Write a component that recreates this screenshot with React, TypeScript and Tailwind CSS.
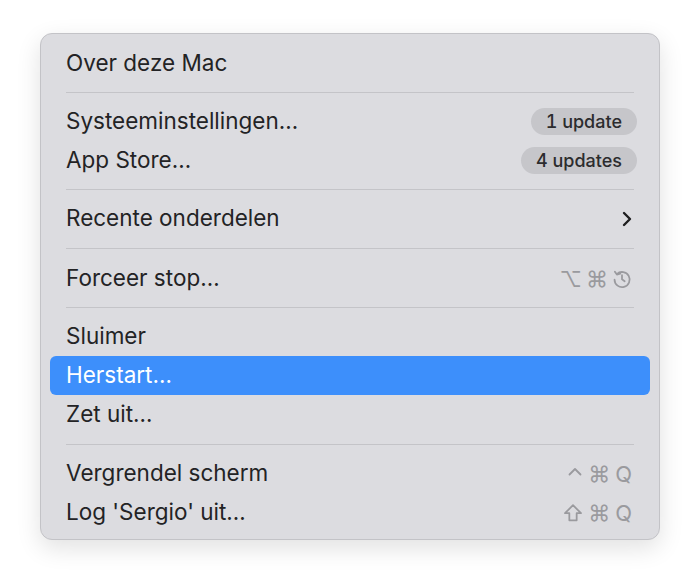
import React from "react";

type Item =
  | { kind: "sep"; h: string }
  | {
      kind: "item";
      label: string;
      badge?: string;
      chevron?: boolean;
      shortcut?: React.ReactNode;
      active?: boolean;
    };

const RestartIcon = () => (
  <svg width="20" height="20" viewBox="0 0 18 18" fill="none" stroke="currentColor" strokeWidth="1.6" strokeLinecap="round" strokeLinejoin="round">
    <path d="M4.4 4.6 A6.8 6.8 0 1 1 2.3 9.6" />
    <path d="M2.6 2.4 L4.4 5 L7.4 4.2" />
    <path d="M9 5.6 L9 9.3 L11.4 11" />
  </svg>
);

const ShiftIcon = () => (
  <svg width="20" height="20" viewBox="0 0 18 18" fill="none" stroke="currentColor" strokeWidth="1.6" strokeLinejoin="round">
    <path d="M9 2 L16.2 9.2 L12.3 9.2 L12.3 15.6 L5.7 15.6 L5.7 9.2 L1.8 9.2 Z" />
  </svg>
);

const CaretIcon = () => (
  <svg width="16" height="20" viewBox="0 0 16 20" fill="none" stroke="currentColor" strokeWidth="1.8" strokeLinecap="round" strokeLinejoin="round">
    <path d="M2.5 10.5 L8 5 L13.5 10.5" />
  </svg>
);

const items: Item[] = [
  { kind: "item", label: "Over deze Mac" },
  { kind: "sep", h: "h-[19px]" },
  { kind: "item", label: "Systeeminstellingen…", badge: "1 update" },
  { kind: "item", label: "App Store…", badge: "4 updates" },
  { kind: "sep", h: "h-[19px]" },
  { kind: "item", label: "Recente onderdelen", chevron: true },
  { kind: "sep", h: "h-[21px]" },
  {
    kind: "item",
    label: "Forceer stop…",
    shortcut: (
      <span className="flex items-center gap-[4px]">
        <span>⌥</span>
        <span>⌘</span>
        <RestartIcon />
      </span>
    ),
  },
  { kind: "sep", h: "h-[19px]" },
  { kind: "item", label: "Sluimer" },
  { kind: "item", label: "Herstart…", active: true },
  { kind: "item", label: "Zet uit…" },
  { kind: "sep", h: "h-[20px]" },
  {
    kind: "item",
    label: "Vergrendel scherm",
    shortcut: (
      <span className="flex items-center gap-[5px]">
        <CaretIcon />
        <span>⌘</span>
        <span>Q</span>
      </span>
    ),
  },
  {
    kind: "item",
    label: "Log 'Sergio' uit…",
    shortcut: (
      <span className="flex items-center gap-[5px]">
        <ShiftIcon />
        <span>⌘</span>
        <span>Q</span>
      </span>
    ),
  },
];

export default function App() {
  return (
    <div
      className="w-[700px] h-[588px] bg-white pt-[33px] pl-[40px]"
      style={{ fontFamily: "Inter, 'Noto Sans', sans-serif" }}
    >
      <div className="w-[620px] rounded-[12px] bg-[#dcdce0] border border-[#c3c3c7] shadow-[0_8px_24px_rgba(0,0,0,0.12)] px-[9px] pt-[10px] pb-[7px]">
        {items.map((it, i) =>
          it.kind === "sep" ? (
            <div key={i} className={it.h + " flex items-center px-4"}>
              <div className="h-px w-full bg-[#c4c4c8]" />
            </div>
          ) : (
            <div
              key={i}
              className={
                "h-[39px] flex items-center justify-between pl-4 rounded-[6px] " +
                (it.active ? "bg-[#3d8ffb] text-white" : "text-[#232325]")
              }
            >
              <span className="text-[22.5px] leading-none">{it.label}</span>
              {it.badge && (
                <span className="mr-[13px] h-[27px] px-[15px] flex items-center rounded-full bg-[#c6c6ca] text-[#2c2c2e] text-[18px] font-medium tabular-nums">
                  {it.badge}
                </span>
              )}
              {it.chevron && (
                <svg className="mr-[17px]" width="12" height="16" viewBox="0 0 12 16" fill="none" stroke="#1e1e20" strokeWidth="2.4" strokeLinecap="round" strokeLinejoin="round">
                  <path d="M3 2 L9 8 L3 14" />
                </svg>
              )}
              {it.shortcut && (
                <span className="mr-[18px] text-[#9a9a9e] text-[22px] leading-none">{it.shortcut}</span>
              )}
            </div>
          )
        )}
      </div>
    </div>
  );
}
